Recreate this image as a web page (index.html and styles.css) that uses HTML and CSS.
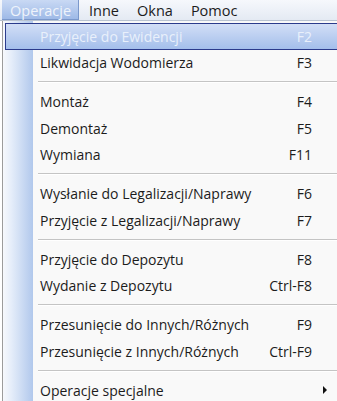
FILE: index.html
```html
<!DOCTYPE html>
<html lang="pl">
<head>
<meta charset="utf-8">
<title>Operacje</title>
<link rel="stylesheet" href="styles.css">
</head>
<body>
<div class="screen">
  <nav class="menubar">
    <span class="mb-item active">Operacje</span>
    <span class="mb-item">Inne</span>
    <span class="mb-item">Okna</span>
    <span class="mb-item">Pomoc</span>
  </nav>
  <div class="menu">
    <div class="item selected"><span class="label">Przyjęcie do Ewidencji</span><span class="key">F2</span><span class="sub"></span></div>
    <div class="item"><span class="label">Likwidacja Wodomierza</span><span class="key">F3</span><span class="sub"></span></div>
    <div class="sep"><span class="line"></span></div>
    <div class="item"><span class="label">Montaż</span><span class="key">F4</span><span class="sub"></span></div>
    <div class="item"><span class="label">Demontaż</span><span class="key">F5</span><span class="sub"></span></div>
    <div class="item"><span class="label">Wymiana</span><span class="key">F11</span><span class="sub"></span></div>
    <div class="sep"><span class="line"></span></div>
    <div class="item"><span class="label">Wysłanie do Legalizacji/Naprawy</span><span class="key">F6</span><span class="sub"></span></div>
    <div class="item"><span class="label">Przyjęcie z Legalizacji/Naprawy</span><span class="key">F7</span><span class="sub"></span></div>
    <div class="sep"><span class="line"></span></div>
    <div class="item"><span class="label">Przyjęcie do Depozytu</span><span class="key">F8</span><span class="sub"></span></div>
    <div class="item"><span class="label">Wydanie z Depozytu</span><span class="key">Ctrl-F8</span><span class="sub"></span></div>
    <div class="sep"><span class="line"></span></div>
    <div class="item"><span class="label">Przesunięcie do Innych/Różnych</span><span class="key">F9</span><span class="sub"></span></div>
    <div class="item"><span class="label">Przesunięcie z Innych/Różnych</span><span class="key">Ctrl-F9</span><span class="sub"></span></div>
    <div class="sep"><span class="line"></span></div>
    <div class="item"><span class="label">Operacje specjalne</span><span class="key"></span><span class="sub"><span class="arrow"></span></span></div>
  </div>
</div>
</body>
</html>
```

FILE: styles.css
```css
html, body {
  margin: 0;
  padding: 0;
}

body {
  width: 337px;
  height: 401px;
  overflow: hidden;
  background: #ffffff;
  font-family: "Open Sans", "Noto Sans", sans-serif;
  font-size: 14px;
  color: #1c1c1c;
}

.screen {
  width: 337px;
  height: 401px;
  overflow: hidden;
}

.menubar {
  display: flex;
  align-items: stretch;
  height: 20px;
  padding-left: 2px;
  font-size: 14.5px;
  background: linear-gradient(#f6f8fc, #e4eaf3);
  border-bottom: 1px solid #b8c2d0;
}

.mb-item {
  display: flex;
  align-items: center;
  padding: 0 8px 0 9px;
  margin-right: 1px;
}

.mb-item.active {
  padding: 0 8px 0 8px;
  background: linear-gradient(#c9d9f4, #9cb8e6);
  color: #eef3fb;
  box-shadow: inset -1px -1px 0 #7b98cb;
}

.menu {
  width: 340px;
  margin-left: 2px;
  padding-top: 2px;
  border-left: 1px solid #9c9c9c;
  background: linear-gradient(to right, #f7f9fd 0px, #e6eefa 8px, #b1c8ec 30px, #f9f9f9 30px);
}

.item {
  box-sizing: border-box;
  display: grid;
  grid-template-columns: 1fr auto 25px;
  align-items: center;
  height: 26.5px;
  margin: 0 5px 0 2px;
  padding-left: 34px;
  border: 1px solid transparent;
}

.item.selected {
  background: linear-gradient(#d2def6, #a4bfeb);
  border-color: #2b3b8c;
  color: #e9f0fb;
}

.label {
  white-space: nowrap;
}

.key {
  text-align: right;
  white-space: nowrap;
}

.sub {
  display: flex;
  align-items: center;
  padding-left: 11px;
}

.arrow {
  width: 0;
  height: 0;
  border-left: 4px solid #111111;
  border-top: 4px solid transparent;
  border-bottom: 4px solid transparent;
}

.sep {
  box-sizing: border-box;
  display: flex;
  align-items: center;
  height: 12.5px;
  padding-left: 35px;
  padding-right: 6px;
}

.line {
  flex: 1;
  height: 0;
  border-top: 1px solid #c4c4c4;
  border-bottom: 1px solid #ffffff;
}
```
